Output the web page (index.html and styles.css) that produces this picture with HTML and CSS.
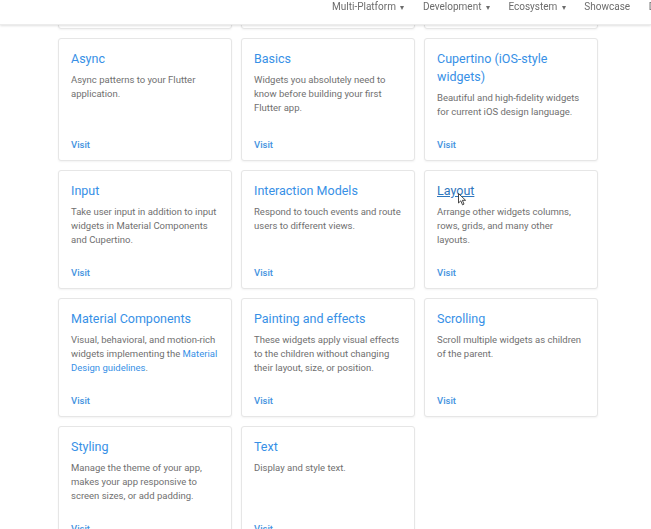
FILE: index.html
```html
<!DOCTYPE html>
<html>
<head>
<meta charset="utf-8">
<link rel="stylesheet" href="styles.css">
</head>
<body>
<header class="topbar">
  <nav class="nav">
    <span class="nav-item">Multi-Platform <span class="caret">▾</span></span>
    <span class="nav-item">Development <span class="caret">▾</span></span>
    <span class="nav-item">Ecosystem <span class="caret">▾</span></span>
    <span class="nav-item">Showcase</span>
    <span class="nav-item">Docs</span>
  </nav>
</header>
<main class="catalog">
  <div class="card">
    <a class="card-title">Accessibility</a>
    <p class="card-desc">Make your app accessible.</p>
    <a class="visit">Visit</a>
  </div>
  <div class="card">
    <a class="card-title">Animation and motion</a>
    <p class="card-desc">Bring animations to your app.</p>
    <a class="visit">Visit</a>
  </div>
  <div class="card">
    <a class="card-title">Assets, images, and icons</a>
    <p class="card-desc">Manage assets, display images, and show icons.</p>
    <a class="visit">Visit</a>
  </div>

  <div class="card">
    <a class="card-title">Async</a>
    <p class="card-desc">Async patterns to your Flutter application.</p>
    <a class="visit">Visit</a>
  </div>
  <div class="card">
    <a class="card-title">Basics</a>
    <p class="card-desc">Widgets you absolutely need to know before building your first Flutter app.</p>
    <a class="visit">Visit</a>
  </div>
  <div class="card">
    <a class="card-title">Cupertino (iOS-style widgets)</a>
    <p class="card-desc">Beautiful and high-fidelity widgets for current iOS design language.</p>
    <a class="visit">Visit</a>
  </div>

  <div class="card">
    <a class="card-title">Input</a>
    <p class="card-desc">Take user input in addition to input widgets in Material Components and Cupertino.</p>
    <a class="visit">Visit</a>
  </div>
  <div class="card">
    <a class="card-title">Interaction Models</a>
    <p class="card-desc">Respond to touch events and route users to different views.</p>
    <a class="visit">Visit</a>
  </div>
  <div class="card hovered">
    <a class="card-title">Layout</a>
    <p class="card-desc">Arrange other widgets columns, rows, grids, and many other layouts.</p>
    <a class="visit">Visit</a>
    <svg class="cursor" width="9" height="13" viewBox="0 0 9 13"><path d="M0.5 0.5 L0.5 10 L2.8 7.8 L4.5 11.8 L6 11.1 L4.4 7.3 L7.6 7.3 Z" fill="#fff" stroke="#333" stroke-width="0.9" stroke-linejoin="round"/></svg>
  </div>

  <div class="card">
    <a class="card-title">Material Components</a>
    <p class="card-desc">Visual, behavioral, and motion-rich widgets implementing the <a class="inline-link">Material Design guidelines</a>.</p>
    <a class="visit">Visit</a>
  </div>
  <div class="card">
    <a class="card-title">Painting and effects</a>
    <p class="card-desc">These widgets apply visual effects to the children without changing their layout, size, or position.</p>
    <a class="visit">Visit</a>
  </div>
  <div class="card">
    <a class="card-title">Scrolling</a>
    <p class="card-desc">Scroll multiple widgets as children of the parent.</p>
    <a class="visit">Visit</a>
  </div>

  <div class="card">
    <a class="card-title">Styling</a>
    <p class="card-desc">Manage the theme of your app, makes your app responsive to screen sizes, or add padding.</p>
    <a class="visit">Visit</a>
  </div>
  <div class="card">
    <a class="card-title">Text</a>
    <p class="card-desc">Display and style text.</p>
    <a class="visit">Visit</a>
  </div>
</main>
</body>
</html>
```
FILE: styles.css
```css
html, body {
  margin: 0;
  padding: 0;
  background: #fff;
  overflow: hidden;
}
body {
  font-family: Roboto, "Liberation Sans", sans-serif;
  height: 529px;
}
.topbar {
  position: fixed;
  top: 0;
  left: 0;
  right: 0;
  height: 24px;
  background: #fff;
  box-shadow: 0 1px 2px rgba(0,0,0,0.12);
  border-bottom: 1px solid #ececec;
  z-index: 10;
}
.nav {
  display: flex;
  gap: 18.5px;
  padding: 1px 0 0 332px;
  white-space: nowrap;
  font-size: 10px;
  line-height: 12px;
  color: #6c6c6c;
}
.caret {
  font-size: 8px;
  margin-left: 2px;
}
.catalog {
  display: grid;
  grid-template-columns: repeat(3, 174px);
  column-gap: 9px;
  row-gap: 9px;
  padding-left: 58px;
  margin-top: -76px;
}
.card {
  position: relative;
  display: flex;
  flex-direction: column;
  border: 1px solid #e6e6e6;
  border-radius: 3px;
  box-shadow: 0 1px 2px rgba(0,0,0,0.05);
  padding: 11px 12px 8px;
  background: #fff;
}
.card-title {
  font-size: 12.5px;
  line-height: 18px;
  color: #3790e6;
}
.hovered .card-title {
  text-decoration: underline;
  color: #2f76bd;
  align-self: flex-start;
}
.card-desc {
  margin: 5px 0 19px;
  font-size: 9.5px;
  line-height: 14px;
  color: #707070;
}
.inline-link {
  color: #3790e6;
}
.visit {
  margin-top: auto;
  font-size: 9.5px;
  line-height: 14px;
  font-weight: 500;
  color: #4493e0;
}
.cursor {
  position: absolute;
  left: 33px;
  top: 22px;
}
```
